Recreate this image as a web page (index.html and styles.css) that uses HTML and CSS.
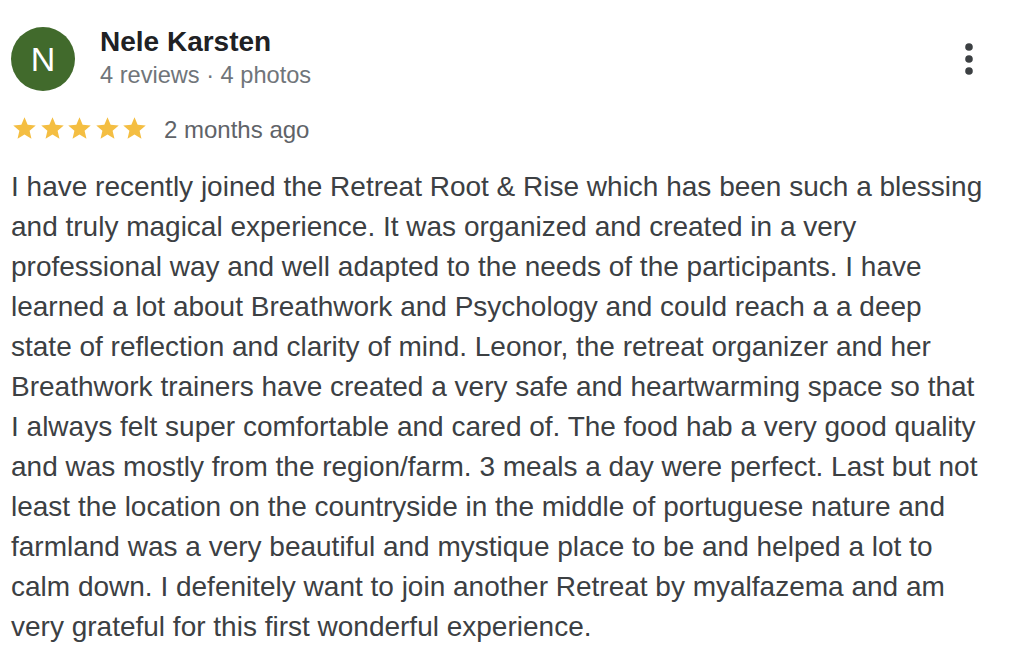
FILE: index.html
```html
<!DOCTYPE html>
<html>
<head>
<meta charset="utf-8">
<link rel="stylesheet" href="styles.css">
</head>
<body>
<div class="review">
  <div class="header">
    <div class="avatar">N</div>
    <div class="who">
      <div class="name">Nele Karsten</div>
      <div class="meta">4 reviews · 4 photos</div>
    </div>
    <div class="more">
      <svg width="10" height="34" viewBox="0 0 10 34"><circle cx="5" cy="5" r="3.8" fill="#3c4043"/><circle cx="5" cy="17" r="3.8" fill="#3c4043"/><circle cx="5" cy="29" r="3.8" fill="#3c4043"/></svg>
    </div>
  </div>
  <div class="rating">
    <div class="stars">
      <svg class="star" viewBox="0 0 24 24"><path d="M12 17.27L18.18 21l-1.64-7.03L22 9.24l-7.19-.61L12 2 9.19 8.63 2 9.24l5.46 4.73L5.82 21z"/></svg>
      <svg class="star" viewBox="0 0 24 24"><path d="M12 17.27L18.18 21l-1.64-7.03L22 9.24l-7.19-.61L12 2 9.19 8.63 2 9.24l5.46 4.73L5.82 21z"/></svg>
      <svg class="star" viewBox="0 0 24 24"><path d="M12 17.27L18.18 21l-1.64-7.03L22 9.24l-7.19-.61L12 2 9.19 8.63 2 9.24l5.46 4.73L5.82 21z"/></svg>
      <svg class="star" viewBox="0 0 24 24"><path d="M12 17.27L18.18 21l-1.64-7.03L22 9.24l-7.19-.61L12 2 9.19 8.63 2 9.24l5.46 4.73L5.82 21z"/></svg>
      <svg class="star" viewBox="0 0 24 24"><path d="M12 17.27L18.18 21l-1.64-7.03L22 9.24l-7.19-.61L12 2 9.19 8.63 2 9.24l5.46 4.73L5.82 21z"/></svg>
    </div>
    <span class="date">2 months ago</span>
  </div>
  <p class="text">I have recently joined the Retreat Root &amp; Rise which has been such a blessing and truly magical experience. It was organized and created in a very professional way and well adapted to the needs of the participants. I have learned a lot about Breathwork and Psychology and could reach a a deep state of reflection and clarity of mind. Leonor, the retreat organizer and her Breathwork trainers have created a very safe and heartwarming space so that I always felt super comfortable and cared of. The food hab a very good quality and was mostly from the region/farm. 3 meals a day were perfect. Last but not least the location on the countryside in the middle of portuguese nature and farmland was a very beautiful and mystique place to be and helped a lot to calm down. I defenitely want to join another Retreat by myalfazema and am very grateful for this first wonderful experience.</p>
</div>
</body>
</html>
```
FILE: styles.css
```css
html, body { margin: 0; padding: 0; background: #fff; }
body { font-family: "Liberation Sans", Arial, sans-serif; }
.review { width: 990px; padding: 27px 0 0 11px; }
.header { display: flex; align-items: flex-start; }
.avatar {
  width: 64px; height: 64px; border-radius: 50%;
  background: #416a2c; color: #fff;
  display: flex; align-items: center; justify-content: center;
  font-size: 34px; flex: none;
}
.who { margin-left: 25px; }
.name { font-size: 28px; font-weight: bold; color: #202124; line-height: 30px; }
.meta { font-size: 23.6px; color: #70757a; line-height: 36px; }
.more { margin-left: auto; margin-top: 15px; margin-right: 27px; }
.rating { display: flex; align-items: flex-start; margin-top: 22px; height: 30px; }
.stars { display: flex; gap: 0.5px; }
.star { width: 27px; height: 27px; fill: #f4be42; display: block; }
.date { margin-left: 16px; font-size: 24px; line-height: 30px; color: #5f6368; }
.text { margin: 22px 0 0; max-width: 977px; font-size: 28px; line-height: 40px; color: #3c4043; }
```
